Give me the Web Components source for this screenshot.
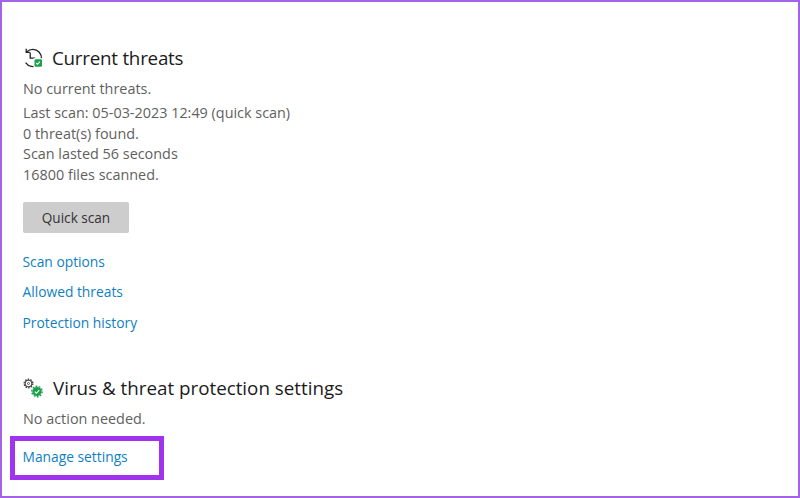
<!DOCTYPE html>
<html>
<head>
<meta charset="utf-8">
<style>
  html, body { margin: 0; height: 100%; background: #fff; }
  body { font-family: "Open Sans", "Noto Sans", sans-serif; }
</style>
</head>
<body>
<security-page>
  <threat-section>
    <svg slot="icon" width="20" height="20" viewBox="0 0 20 20" fill="none">
      <path d="M3.6 4A8.6 8.6 0 1 1 2.6 14.6" stroke="#222" stroke-width="1.3"/>
      <path d="M3.2 .8v3.6h3.6" stroke="#222" stroke-width="1.3"/>
      <path d="M7.2 4.5v5.6h5" stroke="#222" stroke-width="1.3"/>
      <rect x="10.5" y="10.2" width="9.5" height="9.5" fill="#fff"/>
      <rect x="11.5" y="11.2" width="7.5" height="7.5" rx="1.2" fill="#1c9f4c"/>
      <path d="M13.2 15l1.3 1.3 2.4-2.6" stroke="#fff" stroke-width="1.1"/>
    </svg>
    <span slot="title" style="letter-spacing:-.24px">Current threats</span>
    <div class="lines">
      <p-line gap="3">No current threats.</p-line>
      <p-line>Last scan: 05-03-2023 12:49 (quick scan)</p-line>
      <p-line>0 threat(s) found.</p-line>
      <p-line>Scan lasted 56 seconds</p-line>
      <p-line>16800 files scanned.</p-line>
    </div>
    <scan-button>Quick scan</scan-button>
    <link-list>
      <a-link>Scan options</a-link>
      <a-link>Allowed threats</a-link>
      <a-link>Protection history</a-link>
    </link-list>
  </threat-section>
  <threat-section class="second">
    <svg slot="icon" width="20" height="20" viewBox="0 0 20 20" fill="none">
      <circle cx="5.5" cy="5.5" r="3.3" stroke="#444" stroke-width="1.1"/>
      <circle cx="5.5" cy="5.5" r="4.3" stroke="#444" stroke-width="1.4" stroke-dasharray="1.5 1.2"/>
      <circle cx="5.5" cy="5.5" r="1" stroke="#444" stroke-width=".8"/>
      <circle cx="14" cy="13.5" r="6.6" fill="#fff"/>
      <circle cx="14" cy="13.5" r="4.6" fill="#1c9f4c"/>
      <circle cx="14" cy="13.5" r="5.2" stroke="#1c9f4c" stroke-width="1.4" stroke-dasharray="1.8 1.4"/>
      <path d="M11.8 13.7l1.6 1.6 2.9-3.1" stroke="#fff" stroke-width="1.1"/>
    </svg>
    <span slot="title" style="margin-left:1px">Virus &amp; threat protection settings</span>
    <p-line>No action needed.</p-line>
    <mark-box><a-link>Manage settings</a-link></mark-box>
  </threat-section>
</security-page>
<script>
class SecurityPage extends HTMLElement {
  constructor() {
    super();
    this.attachShadow({mode: 'open'});
    this.shadowRoot.innerHTML = `
      <style>
        :host {
          display: flex;
          flex-direction: column;
          box-sizing: border-box;
          height: 498px;
          width: 800px;
          border: 2px solid #a463e6;
          padding: 43px 0 0 21px;
          overflow: hidden;
        }
      </style>
      <slot></slot>`;
  }
}

class ThreatSection extends HTMLElement {
  constructor() {
    super();
    this.attachShadow({mode: 'open'});
    this.shadowRoot.innerHTML = `
      <style>
        :host { display: block; }
        :host(.second) { margin-top: 42px; }
        .head {
          display: flex;
          align-items: center;
          gap: 9px;
          height: 26px;
          font-size: 18.8px;
          color: #1b1b1b;
        }
        ::slotted(svg) { display: block; }
        .body { margin-top: 8px; }
      </style>
      <div class="head"><slot name="icon"></slot><slot name="title"></slot></div>
      <div class="body"><slot></slot></div>`;
  }
}

class PLine extends HTMLElement {
  constructor() {
    super();
    this.attachShadow({mode: 'open'});
    this.shadowRoot.innerHTML = `
      <style>
        :host {
          display: block;
          font-size: 14.4px;
          line-height: 20.8px;
          color: #5f5f5f;
        }
      </style>
      <slot></slot>`;
  }
  connectedCallback() {
    const gap = this.getAttribute('gap');
    if (gap) this.style.marginBottom = gap + 'px';
  }
}

class ScanButton extends HTMLElement {
  constructor() {
    super();
    this.attachShadow({mode: 'open'});
    this.shadowRoot.innerHTML = `
      <style>
        :host {
          display: flex;
          align-items: center;
          justify-content: center;
          width: 106px;
          height: 31px;
          margin-top: 16px;
          background: #cdcdcd;
          border-radius: 2px;
          font-size: 13.6px;
          color: #333;
        }
      </style>
      <slot></slot>`;
  }
}

class LinkList extends HTMLElement {
  constructor() {
    super();
    this.attachShadow({mode: 'open'});
    this.shadowRoot.innerHTML = `
      <style>
        :host {
          display: flex;
          flex-direction: column;
          align-items: flex-start;
          gap: 10.5px;
          margin: 19px 0 0 -.5px;
        }
      </style>
      <slot></slot>`;
  }
}

class ALink extends HTMLElement {
  constructor() {
    super();
    this.attachShadow({mode: 'open'});
    this.shadowRoot.innerHTML = `
      <style>
        :host {
          display: block;
          font-size: 13.8px;
          line-height: 20px;
          color: #0f7fc4;
        }
      </style>
      <slot></slot>`;
  }
}

class MarkBox extends HTMLElement {
  constructor() {
    super();
    this.attachShadow({mode: 'open'});
    this.shadowRoot.innerHTML = `
      <style>
        :host {
          display: block;
          box-sizing: border-box;
          width: 154px;
          height: 44px;
          margin: 6px 0 0 -13px;
          border: 5px solid #a033ee;
          padding: 6px 0 0 7.5px;
        }
      </style>
      <slot></slot>`;
  }
}

customElements.define('security-page', SecurityPage);
customElements.define('threat-section', ThreatSection);
customElements.define('p-line', PLine);
customElements.define('scan-button', ScanButton);
customElements.define('link-list', LinkList);
customElements.define('a-link', ALink);
customElements.define('mark-box', MarkBox);
</script>
</body>
</html>
